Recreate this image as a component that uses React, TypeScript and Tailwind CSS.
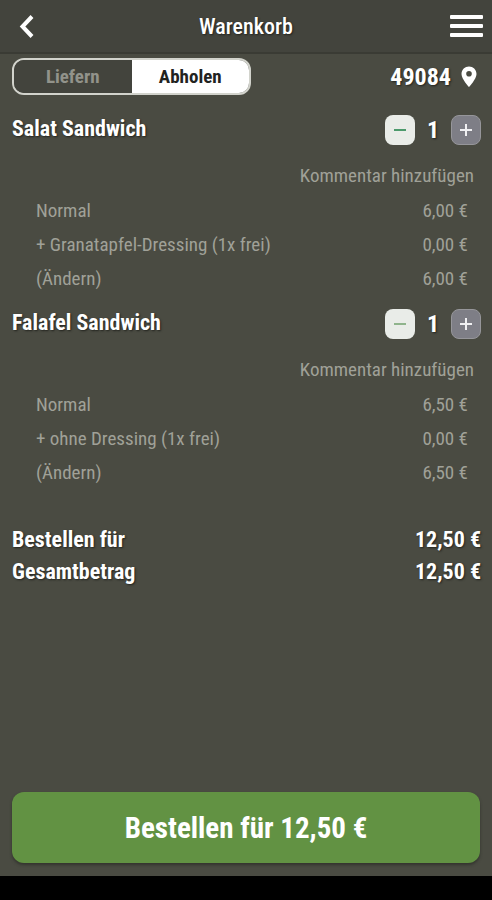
import { useState } from "react";

type Line = { label: string; price: string };
type Item = { name: string; minus: string; lines: Line[]; total: string };

const items: Item[] = [
  {
    name: "Salat Sandwich",
    minus: "text-[#4c9a6c]",
    lines: [
      { label: "Normal", price: "6,00 €" },
      { label: "+ Granatapfel-Dressing (1x frei)", price: "0,00 €" },
    ],
    total: "6,00 €",
  },
  {
    name: "Falafel Sandwich",
    minus: "text-[#8fb48c]",
    lines: [
      { label: "Normal", price: "6,50 €" },
      { label: "+ ohne Dressing (1x frei)", price: "0,00 €" },
    ],
    total: "6,50 €",
  },
];

const shadow = "[text-shadow:1px_1px_2px_#22231e]";

function CartItem({ item }: { item: Item }) {
  const [count, setCount] = useState(1);
  return (
    <section>
      <div className="flex h-14 items-center justify-between pr-[11px] pl-3">
        <h2 className={`pb-0.5 text-[22px] leading-7 font-bold text-white ${shadow}`}>{item.name}</h2>
        <div className="flex items-center">
          <button
            type="button"
            aria-label={`${item.name} verringern`}
            onClick={() => setCount(Math.max(0, count - 1))}
            className={`flex size-[30px] items-center justify-center rounded-lg bg-[#e9ece8] ${item.minus}`}
          >
            <svg width="14" height="14" viewBox="0 0 14 14" stroke="currentColor" strokeWidth="2">
              <path d="M1 7h12" />
            </svg>
          </button>
          <span className={`w-9 text-center text-2xl leading-7 font-bold text-white ${shadow}`}>{count}</span>
          <button
            type="button"
            aria-label={`${item.name} erhöhen`}
            onClick={() => setCount(count + 1)}
            className="flex size-[30px] items-center justify-center rounded-lg border border-[#96969a] bg-[#7e7e86] text-[#f0f0f2]"
          >
            <svg width="14" height="14" viewBox="0 0 14 14" stroke="currentColor" strokeWidth="2">
              <path d="M1 7h12M7 1v12" />
            </svg>
          </button>
        </div>
      </div>
      <div className="flex h-9 items-center justify-end pr-[18px] text-[19px] text-[#a0a198]">
        <button type="button">Kommentar hinzufügen</button>
      </div>
      <ul className="pr-6 pl-9 text-[19px] text-[#a0a198]">
        {item.lines.map((line) => (
          <li key={line.label} className="flex h-[34px] items-center justify-between">
            <span>{line.label}</span>
            <span>{line.price}</span>
          </li>
        ))}
        <li className="flex h-[34px] items-center justify-between">
          <button type="button">(Ändern)</button>
          <span>{item.total}</span>
        </li>
      </ul>
    </section>
  );
}

export default function App() {
  const [mode, setMode] = useState("Abholen");
  return (
    <div className="flex min-h-screen flex-col bg-[#4a4b42] font-['Roboto_Condensed','Liberation_Sans_Narrow',Roboto,sans-serif]">
      <header className="grid h-[54px] grid-cols-[1fr_auto_1fr] items-center border-b-2 border-[#3a3b34] bg-[#43443d] px-[9px] text-white">
        <button type="button" aria-label="Zurück" className="justify-self-start pl-[9px]">
          <svg width="16" height="24" viewBox="0 0 16 24" fill="none" stroke="currentColor" strokeWidth="4">
            <path d="M14 2.500L4.500 12.500L14 22.500" />
          </svg>
        </button>
        <h1 className={`pt-0.5 text-[22px] leading-7 font-medium ${shadow}`}>Warenkorb</h1>
        <button type="button" aria-label="Menü" className="justify-self-end">
          <svg width="33" height="22" viewBox="0 0 33 22" fill="currentColor">
            <rect width="33" height="4" rx="1" />
            <rect y="9" width="33" height="4" rx="1" />
            <rect y="18" width="33" height="4" rx="1" />
          </svg>
        </button>
      </header>

      <main className="flex grow flex-col">
        <div className="flex h-12 items-start justify-between pt-1 pr-[15px] pl-3">
          <div className="flex h-[37px] w-[239px] overflow-hidden rounded-xl border-2 border-[#d2d3cc]">
            {["Liefern", "Abholen"].map((name) => (
              <button
                key={name}
                type="button"
                aria-pressed={mode === name}
                onClick={() => setMode(name)}
                className={`flex-1 text-[19px] leading-7 font-bold ${
                  mode === name ? "bg-white text-[#22231f]" : "bg-[#43443d] text-[#92938b]"
                }`}
              >
                {name}
              </button>
            ))}
          </div>
          <button type="button" className={`flex h-[37px] items-center gap-[10px] text-2xl font-bold text-white ${shadow}`}>
            49084
            <svg width="16" height="22" viewBox="0 0 16 22" fill="currentColor">
              <path
                fillRule="evenodd"
                d="M8 0.500C4 0.500 0.500 3.500 0.500 8c0 5 7.500 13 7.500 13s7.500-8 7.500-13c0-4.500-3.500-7.500-7.500-7.500Zm0 4.500a2.800 2.800 0 1 1 0 5.600 2.800 2.800 0 0 1 0-5.600Z"
              />
            </svg>
          </button>
        </div>

        {items.map((item) => (
          <CartItem key={item.name} item={item} />
        ))}

        <dl className={`mt-[33px] pr-[11px] pl-3 text-[22px] font-bold text-white ${shadow}`}>
          {["Bestellen für", "Gesamtbetrag"].map((label) => (
            <div key={label} className="flex h-8 items-center justify-between">
              <dt>{label}</dt>
              <dd>12,50 €</dd>
            </div>
          ))}
        </dl>

        <div className="mt-auto px-3 pb-[13px]">
          <button
            type="button"
            className="h-[71px] w-full rounded-xl bg-[#629243] pt-0.5 text-[29px] font-bold text-white shadow-[0_2px_3px_#33342e]"
          >
            Bestellen für 12,50 €
          </button>
        </div>
      </main>
      <footer className="h-6 bg-black" />
    </div>
  );
}
